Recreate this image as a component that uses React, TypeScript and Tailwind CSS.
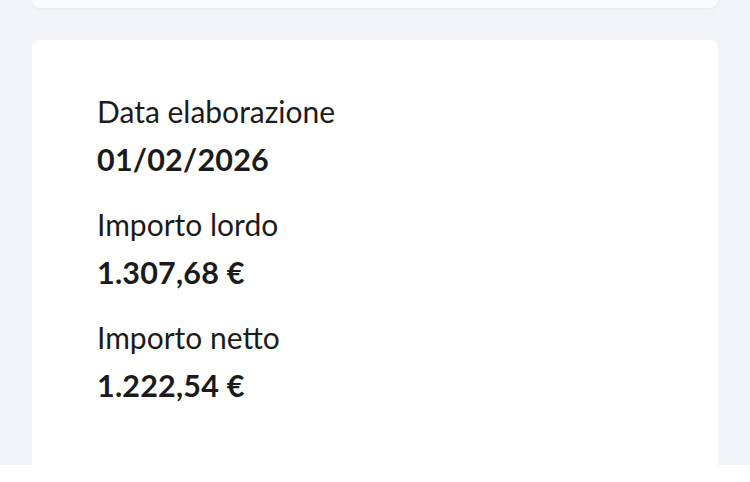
const rows = [
  { label: 'Data elaborazione', value: '01/02/2026' },
  { label: 'Importo lordo', value: '1.307,68 €' },
  { label: 'Importo netto', value: '1.222,54 €' },
];

export default function App() {
  return (
    <div className="w-[750px] h-[482px] overflow-hidden bg-[#f2f3f7] flex flex-col font-['Lato',sans-serif] text-[#1b1b1b]">
      {/* previous card, only its bottom edge is visible */}
      <div className="mx-8 h-2 shrink-0 bg-[#fafbfd] rounded-b-lg shadow-[0_1px_3px_rgba(0,0,0,0.05)]" />

      <div className="mx-8 mt-8 h-[425px] shrink-0 bg-white rounded-t-lg pl-[65px] pt-[51px] flex flex-col gap-[25px]">
        {rows.map((r) => (
          <div key={r.label} className="flex flex-col gap-2">
            <p className="text-[30px] leading-[40px] font-normal">{r.label}</p>
            <p className="text-[30.5px] leading-[40px] font-bold tracking-[0.2px]">{r.value}</p>
          </div>
        ))}
      </div>

      <div className="flex-1 bg-white" />
    </div>
  );
}
